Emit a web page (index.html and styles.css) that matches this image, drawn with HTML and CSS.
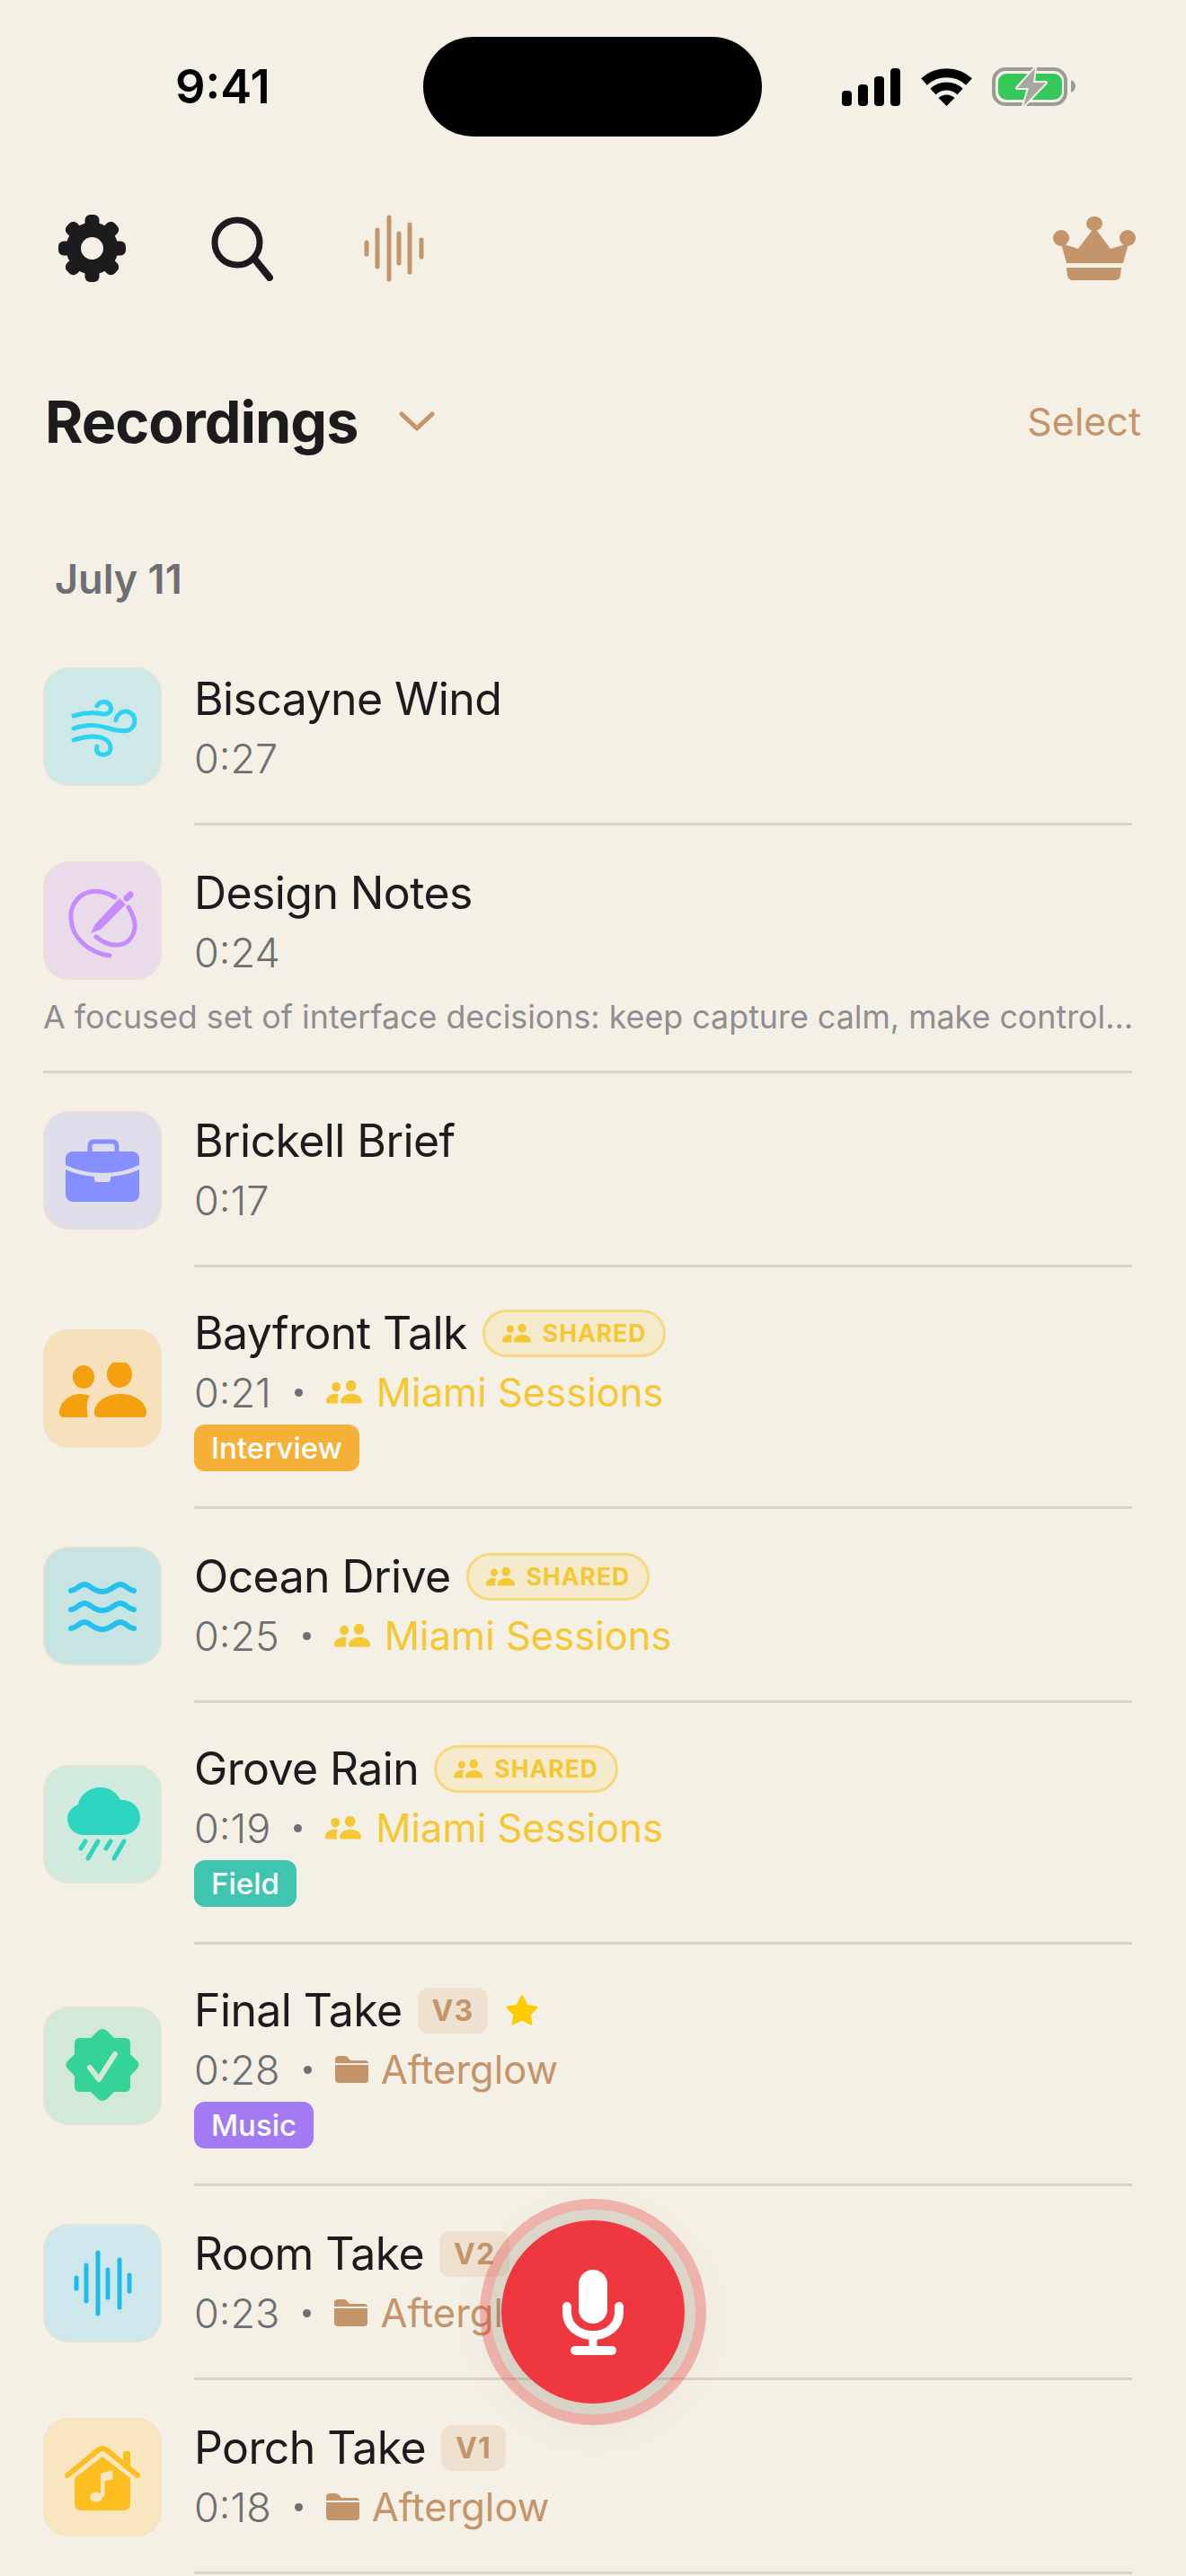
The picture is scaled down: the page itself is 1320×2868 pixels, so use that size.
FILE: index.html
```html
<!DOCTYPE html>
<html>
<head>
    <title>Recordings</title>
    <link rel="stylesheet" href="styles.css">
</head>
<body>
    <svg class="defs" width="0" height="0">
        <symbol id="people" viewBox="17 34 97 61">
            <ellipse cx="44" cy="50" rx="12" ry="13"/>
            <ellipse cx="84" cy="47" rx="14" ry="15"/>
            <path d="M56 90C56 78 69 69 85 69C101 69 114 78 114 90Q114 95 109 95H61Q56 95 56 90Z"/>
            <path d="M17 90C17 78 28 69 41 69C45 69 48 70 51 71C47 76 47 85 49 95H22Q17 95 17 90Z"/>
        </symbol>
        <symbol id="folder" viewBox="0 0 37 30">
            <path d="M0 4a4 4 0 0 1 4-4H11a4 4 0 0 1 3 1.500L17 5H33a4 4 0 0 1 4 4V8H0Z"/>
            <path d="M0 10H37V26a4 4 0 0 1-4 4H4a4 4 0 0 1-4-4Z"/>
        </symbol>
    </svg>

    <div class="phone">
        <div class="status">
            <div class="time">9:41</div>
            <div class="island"></div>
            <div class="status-icons">
                <svg width="66" height="42" viewBox="0 0 66 42">
                    <rect x="0" y="25" width="11" height="17" rx="4"/>
                    <rect x="18" y="18" width="11" height="24" rx="4"/>
                    <rect x="36" y="9" width="11" height="33" rx="4"/>
                    <rect x="54" y="0" width="11" height="42" rx="4"/>
                </svg>
                <svg width="57" height="42" viewBox="0 0 57 42">
                    <path d="M3.500 15A37 37 0 0 1 53.500 15" fill="none" stroke="#000" stroke-width="10"/>
                    <path d="M13.500 26A22 22 0 0 1 43.500 26" fill="none" stroke="#000" stroke-width="9"/>
                    <path d="M28.500 42L19.500 33A13 13 0 0 1 37.500 33Z"/>
                </svg>
                <svg class="battery" width="93" height="44" viewBox="0 0 93 44">
                    <rect x="2" y="2" width="80" height="39" rx="13" fill="none" stroke="#9e9b93" stroke-width="4"/>
                    <rect x="7" y="7" width="71" height="29" rx="9" fill="#34c759"/>
                    <path d="M88 14Q93 16 93 21Q93 26 88 28Z" fill="#9e9b93"/>
                    <path d="M48 1L28 23H41L35 43L60 17H46Z" fill="#a8a6a0" stroke="#f5f0e6" stroke-width="4" stroke-linejoin="round" paint-order="stroke"/>
                </svg>
            </div>
        </div>

        <div class="toolbar">
            <svg class="gear" width="75" height="75" viewBox="0 0 75 75">
                <rect x="29.500" y="0" width="16" height="75" rx="6"/>
                <rect x="29.500" y="0" width="16" height="75" rx="6" transform="rotate(45 37.500 37.500)"/>
                <rect x="29.500" y="0" width="16" height="75" rx="6" transform="rotate(90 37.500 37.500)"/>
                <rect x="29.500" y="0" width="16" height="75" rx="6" transform="rotate(135 37.500 37.500)"/>
                <circle cx="37.500" cy="37.500" r="29"/>
                <circle cx="37.500" cy="37.500" r="12.500" fill="#f5f0e6"/>
            </svg>
            <svg class="search" width="69" height="72" viewBox="0 0 69 72" fill="none" stroke="#1c1c1e" stroke-width="7" stroke-linecap="round">
                <circle cx="29" cy="29" r="25"/>
                <path d="M48 47L65 68" stroke-width="8"/>
            </svg>
            <svg class="wave" width="67" height="75" viewBox="0 0 67 75" fill="none" stroke="#c4956a" stroke-width="5" stroke-linecap="round">
                <path d="M3 31V44M15 17V58M28 3V72M39 21V54M51 11V64M64 28V47"/>
            </svg>
            <svg class="crown" width="92" height="71" viewBox="0 0 92 71" fill="#c4956a">
                <ellipse cx="46" cy="8" rx="9" ry="8"/>
                <circle cx="9" cy="24" r="9"/>
                <circle cx="83" cy="24" r="9"/>
                <path d="M9 30L15 52H78L84 30L64 36L46 12L28 36Z"/>
                <path d="M15 57H76L75 66Q74 71 68 71H22Q17 71 16 66Z"/>
            </svg>
        </div>

        <div class="heading">
            <h1>Recordings</h1>
            <svg class="chevron" width="40" height="24" viewBox="0 0 40 24" fill="none" stroke="#c4956a" stroke-width="5" stroke-linecap="round" stroke-linejoin="round">
                <path d="M3 4L20 20L37 4"/>
            </svg>
            <span class="select">Select</span>
        </div>

        <div class="day">July 11</div>

        <div class="row row-first">
            <div class="tile tile-wind">
                <svg width="132" height="132" viewBox="0 0 132 132" fill="none" stroke="#2bd4f0" stroke-width="5" stroke-linecap="round">
                    <path d="M34 54C44 51 56 50 66 52C74 53 77 47 75 43C73 38 64 36 60 43"/>
                    <path d="M34 68C46 64 58 63 70 67C80 70 88 72 95 70C104 66 104 54 96 50C89 47 82 52 81 59"/>
                    <path d="M34 81C46 77 60 75 69 80C77 85 77 95 69 97C62 98 58 94 60 88"/>
                </svg>
            </div>
            <div class="body">
                <div class="title-line"><span class="title">Biscayne Wind</span></div>
                <div class="meta"><span>0:27</span></div>
            </div>
        </div>

        <div class="row-note">
            <div class="row-top">
                <div class="tile tile-pen">
                    <svg width="132" height="132" viewBox="0 0 132 132">
                        <g fill="none" stroke="#c58cff" stroke-width="5" stroke-linecap="round">
                            <path d="M80 40C70 34 60 32 52 34C38 37 30 50 31 64C32 86 52 102 74 105"/>
                            <path d="M95 51C100 60 103 68 102 74C100 88 90 94 80 93C72 93 65 89 59 84"/>
                            <path d="M93 41L97 37" stroke-width="7"/>
                        </g>
                        <path d="M53 80L58 70L85 41L92 48L64 76Z" fill="#c58cff"/>
                    </svg>
                </div>
                <div class="body-plain">
                    <div class="title-line"><span class="title">Design Notes</span></div>
                    <div class="meta"><span>0:24</span></div>
                </div>
            </div>
            <p class="note">A focused set of interface decisions: keep capture calm, make control…</p>
        </div>

        <div class="row">
            <div class="tile tile-brief">
                <svg width="132" height="132" viewBox="0 0 132 132" fill="#858fff">
                    <path d="M52 45V39Q52 34 57 34H77Q82 34 82 39V45" fill="none" stroke="#858fff" stroke-width="5"/>
                    <path d="M25 60V53a8 8 0 0 1 8-8H99a8 8 0 0 1 8 8V60C95 66 80 69 66 69C52 69 37 66 25 60Z"/>
                    <path d="M25 65C36 70 46 72 57 73V76a3 3 0 0 0 3 3H72a3 3 0 0 0 3-3V73C86 72 96 70 107 65V93a8 8 0 0 1-8 8H33a8 8 0 0 1-8-8Z"/>
                </svg>
            </div>
            <div class="body">
                <div class="title-line"><span class="title">Brickell Brief</span></div>
                <div class="meta"><span>0:17</span></div>
            </div>
        </div>

        <div class="row">
            <div class="tile tile-people">
                <svg class="tile-people-icon" width="97" height="61"><use href="#people"/></svg>
            </div>
            <div class="body body-tagged">
                <div class="title-line">
                    <span class="title">Bayfront Talk</span>
                    <span class="shared"><svg width="32" height="21"><use href="#people"/></svg>SHARED</span>
                </div>
                <div class="meta">
                    <span>0:21</span><i class="dot"></i>
                    <svg class="group-icon" width="40" height="26"><use href="#people"/></svg>
                    <span class="group">Miami Sessions</span>
                </div>
                <span class="chip chip-interview">Interview</span>
            </div>
        </div>

        <div class="row">
            <div class="tile tile-waves">
                <svg width="132" height="132" viewBox="0 0 132 132" fill="none" stroke="#27c0ee" stroke-width="6" stroke-linecap="round">
                    <path d="M31 49C37 49 40 42 46 42C53 42 55 50 66 50C76 50 79 42 86 42C92 42 95 49 101 49"/>
                    <path d="M31 70C37 70 40 63 46 63C53 63 55 71 66 71C76 71 79 63 86 63C92 63 95 70 101 70"/>
                    <path d="M31 91C37 91 40 84 46 84C53 84 55 92 66 92C76 92 79 84 86 84C92 84 95 91 101 91"/>
                </svg>
            </div>
            <div class="body">
                <div class="title-line">
                    <span class="title">Ocean Drive</span>
                    <span class="shared"><svg width="32" height="21"><use href="#people"/></svg>SHARED</span>
                </div>
                <div class="meta">
                    <span>0:25</span><i class="dot"></i>
                    <svg class="group-icon" width="40" height="26"><use href="#people"/></svg>
                    <span class="group">Miami Sessions</span>
                </div>
            </div>
        </div>

        <div class="row">
            <div class="tile tile-rain">
                <svg width="132" height="132" viewBox="0 0 132 132">
                    <path d="M45 78C33 78 27 68 27 60C27 52 32 47 39 44C41 33 52 25 64 25C74 25 82 31 86 39C99 38 108 48 108 58C108 69 100 78 88 78Z" fill="#2dd4bf"/>
                    <path d="M47 85L42 93M61 85L50 104M75 85L70 93M90 85L79 104" fill="none" stroke="#2dd4bf" stroke-width="5" stroke-linecap="round"/>
                </svg>
            </div>
            <div class="body body-tagged">
                <div class="title-line">
                    <span class="title">Grove Rain</span>
                    <span class="shared"><svg width="32" height="21"><use href="#people"/></svg>SHARED</span>
                </div>
                <div class="meta">
                    <span>0:19</span><i class="dot"></i>
                    <svg class="group-icon" width="40" height="26"><use href="#people"/></svg>
                    <span class="group">Miami Sessions</span>
                </div>
                <span class="chip chip-field">Field</span>
            </div>
        </div>

        <div class="row">
            <div class="tile tile-badge">
                <svg width="132" height="132" viewBox="0 0 132 132">
                    <path d="M66 25Q69 25 71 27L79 35H91Q97 35 97 41V53L105 61Q108 65 105 69L97 77V89Q97 95 91 95H79L71 103Q66 107 61 103L53 95H41Q35 95 35 89V77L27 69Q24 65 27 61L35 53V41Q35 35 41 35H53L61 27Q63 25 66 25Z" fill="#36d399"/>
                    <path d="M52 68L62 81L80 53" fill="none" stroke="#d2e9d8" stroke-width="6" stroke-linecap="round" stroke-linejoin="round"/>
                </svg>
            </div>
            <div class="body body-tagged">
                <div class="title-line">
                    <span class="title">Final Take</span>
                    <span class="version">V3</span>
                    <svg class="star" width="38" height="36" viewBox="0 0 38 36">
                        <path d="M19 3L24 13.500L35 15L27 23L29 33L19 28L9 33L11 23L3 15L14 13.500Z" fill="#ffcc00" stroke="#ffcc00" stroke-width="3" stroke-linejoin="round"/>
                    </svg>
                </div>
                <div class="meta">
                    <span>0:28</span><i class="dot"></i>
                    <svg class="folder" width="37" height="30"><use href="#folder"/></svg>
                    <span class="album">Afterglow</span>
                </div>
                <span class="chip chip-music">Music</span>
            </div>
        </div>

        <div class="row">
            <div class="tile tile-audio">
                <svg width="132" height="132" viewBox="0 0 132 132" fill="none" stroke="#1dbaec" stroke-width="5" stroke-linecap="round">
                    <path d="M37 60V72M48 46V86M61 32V100M72 51V82M85 40V93M96 57V75"/>
                </svg>
            </div>
            <div class="body">
                <div class="title-line">
                    <span class="title">Room Take</span>
                    <span class="version">V2</span>
                </div>
                <div class="meta">
                    <span>0:23</span><i class="dot"></i>
                    <svg class="folder" width="37" height="30"><use href="#folder"/></svg>
                    <span class="album">Afterglow</span>
                </div>
            </div>
        </div>

        <div class="row">
            <div class="tile tile-house">
                <svg width="132" height="132" viewBox="0 0 132 132" fill="#fdbe22">
                    <path d="M27 64L61 36Q66 32 71 36L105 64" fill="none" stroke="#fdbe22" stroke-width="6" stroke-linecap="round"/>
                    <rect x="89" y="37" width="8" height="18" rx="2"/>
                    <path d="M66 43L97 67V95Q97 103 89 103H43Q35 103 35 95V67Z"/>
                    <path d="M64 62L77 59V68L68 70V86" fill="#f7e6bf" stroke="#f7e6bf" stroke-width="1"/>
                    <path d="M64 62H68V88H64Z" fill="#f7e6bf"/>
                    <ellipse cx="59" cy="88" rx="7" ry="5.500" fill="#f7e6bf"/>
                </svg>
            </div>
            <div class="body">
                <div class="title-line">
                    <span class="title">Porch Take</span>
                    <span class="version">V1</span>
                </div>
                <div class="meta">
                    <span>0:18</span><i class="dot"></i>
                    <svg class="folder" width="37" height="30"><use href="#folder"/></svg>
                    <span class="album">Afterglow</span>
                </div>
            </div>
        </div>

        <button class="record">
            <svg width="204" height="204" viewBox="0 0 204 204" fill="#fff">
                <rect x="86" y="55" width="32" height="60" rx="16"/>
                <path d="M73 96V102C73 118 86 128 102 128C118 128 131 118 131 102V96" fill="none" stroke="#fff" stroke-width="10" stroke-linecap="round"/>
                <rect x="97.500" y="128" width="9" height="14"/>
                <rect x="77" y="140" width="51" height="10" rx="5"/>
            </svg>
        </button>
    </div>
</body>
</html>
```

FILE: styles.css
```css
* {
    box-sizing: border-box;
}

body {
    margin: 0;
    background: #f5f0e6;
    font-family: Inter, "Noto Sans", sans-serif;
    color: #1c1c1e;
}

.defs {
    position: absolute;
}

.phone {
    position: relative;
    width: 1320px;
    height: 2868px;
    overflow: hidden;
}

/* status bar */
.status {
    display: grid;
    grid-template-columns: 471px 377px 1fr;
    padding-top: 41px;
    height: 152px;
}

.time {
    padding-left: 195px;
    font-size: 52.5px;
    font-weight: 600;
    line-height: 111px;
    color: #000;
}

.island {
    height: 111px;
    border-radius: 56px;
    background: #000;
}

.status-icons {
    display: flex;
    align-items: center;
    gap: 22px;
    padding-left: 89px;
}

/* toolbar */
.toolbar {
    display: flex;
    align-items: center;
    height: 75px;
    margin-top: 87px;
    padding: 0 56px 0 65px;
}

.gear {
    fill: #1c1c1e;
}

.search {
    margin-left: 95px;
}

.wave {
    margin-left: 101px;
}

.crown {
    margin-left: auto;
}

.heading {
    display: flex;
    align-items: center;
    height: 80px;
    margin-top: 115px;
    padding: 0 50px;
}

.heading h1 {
    margin: 0;
    font-size: 64.7px;
    font-weight: 700;
    letter-spacing: -1px;
}

.chevron {
    margin-left: 46px;
}

.select {
    margin-left: auto;
    font-size: 43px;
    color: #c4956a;
}

.day {
    margin: 106px 0 28px 61px;
    height: 60px;
    font-size: 45px;
    font-weight: 600;
    line-height: 60px;
    color: #6e6e73;
}

/* rows */
.row {
    display: flex;
    align-items: center;
    gap: 36px;
    padding: 0 60px 0 48px;
}

.tile {
    flex: none;
    display: flex;
    align-items: center;
    justify-content: center;
    width: 132px;
    height: 132px;
    border: 2px solid rgba(240, 225, 205, 0.6);
    border-radius: 28px;
}

.row-first .tile {
    margin-bottom: 4px;
}

.tile svg {
    flex: none;
    margin: -2px;
}

.tile-wind { background: #cde8e6; }
.tile-pen { background: #eadbea; }
.tile-brief { background: #dfdde9; }
.tile-people { background: #f7e1bd; }
.tile-waves { background: #c6e4e1; }
.tile-rain { background: #d0ebdd; }
.tile-badge { background: #d2e9d8; }
.tile-audio { background: #cee7ea; }
.tile-house { background: #f7e6bf; }

.tile-people-icon {
    fill: #f5a00f;
    transform: translateY(2px);
}

.body {
    flex: 1;
    padding: 42px 0 39px;
    border-bottom: 3px solid #dbd3c5;
}

.body-tagged {
    padding-top: 40px;
}

.body-tagged .chip {
    margin-top: 3px;
}

.body-plain {
    flex: 1;
    padding-top: 42px;
}

.title-line {
    display: flex;
    align-items: center;
    gap: 17px;
    height: 66px;
}

.title {
    font-size: 50px;
    font-weight: 430;
    letter-spacing: -0.6px;
    white-space: nowrap;
}

.meta {
    display: flex;
    align-items: center;
    height: 66px;
    font-size: 45px;
    font-weight: 300;
    color: #6e6e73;
}

.dot {
    width: 9px;
    height: 9px;
    margin: 0 26px;
    border-radius: 50%;
    background: #6e6e73;
}

.group-icon {
    fill: #f4c733;
    margin-right: 16px;
}

.group {
    font-size: 43.5px;
    font-weight: 400;
    color: #f4c733;
}

.folder {
    fill: #c4956a;
    margin-right: 14px;
}

.album {
    font-size: 43.5px;
    font-weight: 400;
    color: #c4956a;
}

.shared {
    display: inline-flex;
    align-items: center;
    gap: 13px;
    height: 53px;
    padding: 0 19px;
    border: 3px solid #f6d97f;
    border-radius: 27px;
    background: #f6eacc;
    font-size: 26.5px;
    font-weight: 700;
    letter-spacing: 1px;
    color: #f4c733;
    fill: #f4c733;
}

.version {
    display: inline-flex;
    align-items: center;
    height: 51px;
    padding: 0 16px;
    border-radius: 12px;
    background: #eee1d0;
    font-size: 32px;
    font-weight: 700;
    letter-spacing: 1px;
    color: #c4956a;
}

.star {
    margin-left: 2px;
}

.chip {
    display: inline-block;
    height: 52px;
    padding: 0 19px;
    border-radius: 12px;
    font-size: 33px;
    font-weight: 500;
    line-height: 52px;
    color: #fff;
    vertical-align: top;
}

.chip-interview { background: #f5b038; }
.chip-field { background: #40c4b2; }
.chip-music { background: #a27bf3; }

.row-note {
    margin: 0 60px 0 48px;
    height: 276px;
    border-bottom: 3px solid #dbd3c5;
}

.row-top {
    display: flex;
    gap: 36px;
    height: 188px;
    align-items: flex-start;
}

.row-top .tile {
    margin-top: 40px;
}

.note {
    margin: 0;
    font-size: 35.8px;
    line-height: 50px;
    color: #8e8e93;
    white-space: nowrap;
}

/* record button, floats over the list */
.record {
    position: absolute;
    left: 558px;
    top: 2472px;
    width: 204px;
    height: 204px;
    padding: 0;
    border: none;
    border-radius: 50%;
    background: #ef3740;
    box-shadow: 0 0 0 12px rgba(120, 120, 95, 0.17), 0 10px 60px rgba(90, 70, 40, 0.12);
}

.record::before {
    content: "";
    position: absolute;
    inset: -24px;
    border: 12px solid rgba(232, 60, 60, 0.33);
    border-radius: 50%;
}

.record svg {
    display: block;
}
```
